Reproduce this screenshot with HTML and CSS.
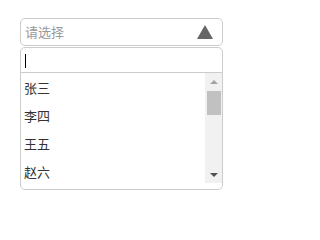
FILE: index.html
```html
<!DOCTYPE html>
<html lang="zh">
<head>
<meta charset="utf-8">
<link rel="stylesheet" href="styles.css">
</head>
<body>
<div class="page">
  <div class="combo">
    <div class="select">
      <span class="placeholder">请选择</span>
      <svg class="arrow" width="16" height="14" viewBox="0 0 16 14"><polygon points="8,0 16,14 0,14" fill="#666"/></svg>
    </div>
    <div class="dropdown">
      <div class="search"><span class="caret"></span></div>
      <div class="list-wrap">
        <ul class="list">
          <li>张三</li>
          <li>李四</li>
          <li>王五</li>
          <li>赵六</li>
        </ul>
        <div class="scrollbar">
          <div class="sb-btn"><span class="tri-up"></span></div>
          <div class="track"><div class="thumb"></div></div>
          <div class="sb-btn"><span class="tri-down"></span></div>
        </div>
      </div>
    </div>
  </div>
</div>
</body>
</html>
```
FILE: styles.css
```css
html, body {
  margin: 0;
  padding: 0;
  background: #fff;
}
body {
  font-family: "Noto Sans CJK SC", "Noto Sans", sans-serif;
  font-size: 13px;
  color: #333;
}
.page {
  padding: 18px 0 0 20px;
}
.combo {
  width: 203px;
}
.select {
  box-sizing: border-box;
  height: 28px;
  border: 1px solid #ccc;
  border-radius: 5px;
  display: flex;
  align-items: center;
  justify-content: space-between;
  padding: 0 9px 0 4px;
}
.placeholder {
  color: #999;
  line-height: 26px;
}
.arrow {
  display: block;
  margin-top: 0px;
}
.dropdown {
  box-sizing: border-box;
  margin-top: 1px;
  border: 1px solid #ccc;
  border-radius: 5px;
  padding-bottom: 6px;
}
.search {
  box-sizing: border-box;
  height: 25px;
  border-bottom: 1px solid #ccc;
  display: flex;
  align-items: flex-end;
  padding: 0 0 4px 4px;
}
.caret {
  display: block;
  width: 1px;
  height: 14px;
  background: #000;
}
.list-wrap {
  display: flex;
  height: 110px;
}
.list {
  flex: 1;
  list-style: none;
  margin: 0;
  padding: 1px 0 0 0;
  overflow: hidden;
}
.list li {
  height: 28px;
  line-height: 28px;
  padding-left: 3px;
  color: #333;
}
.scrollbar {
  width: 17px;
  background: #f1f1f1;
  display: flex;
  flex-direction: column;
}
.sb-btn {
  height: 17px;
  display: flex;
  align-items: center;
  justify-content: center;
}
.tri-up {
  width: 0;
  height: 0;
  border-left: 4px solid transparent;
  border-right: 4px solid transparent;
  border-bottom: 4px solid #a3a3a3;
}
.tri-down {
  width: 0;
  height: 0;
  border-left: 4px solid transparent;
  border-right: 4px solid transparent;
  border-top: 4px solid #505050;
}
.track {
  flex: 1;
  padding: 1px 1px 0 2px;
}
.thumb {
  height: 24px;
  background: #c1c1c1;
}
```
